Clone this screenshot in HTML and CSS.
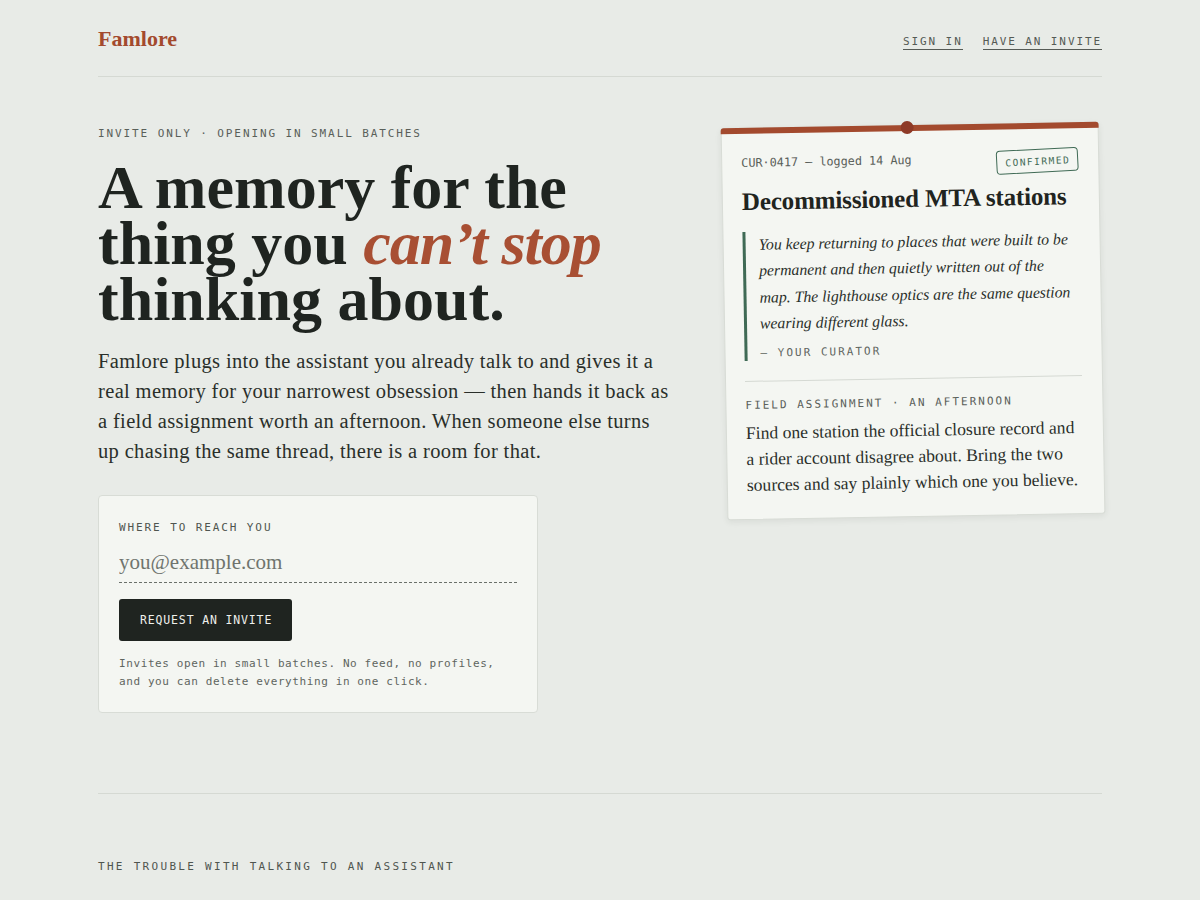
FILE: index.html
```html
<!DOCTYPE html>
<html lang="en">
<head>
<meta charset="utf-8">
<title>Famlore</title>
<link rel="stylesheet" href="styles.css">
</head>
<body>
<div class="page">
  <header class="site-header">
    <div class="logo">Famlore</div>
    <nav class="nav">
      <a href="#" class="nav-link">SIGN IN</a>
      <a href="#" class="nav-link">HAVE AN INVITE</a>
    </nav>
  </header>

  <main class="hero">
    <section class="hero-left">
      <p class="eyebrow">INVITE ONLY · OPENING IN SMALL BATCHES</p>
      <h1 class="headline">A memory for the<br>thing you <em class="accent">can’t stop</em><br>thinking about.</h1>
      <p class="lede">Famlore plugs into the assistant you already talk to and gives it a<br>real memory for your narrowest obsession — then hands it back as<br>a field assignment worth an afternoon. When someone else turns<br>up chasing the same thread, there is a room for that.</p>

      <form class="signup">
        <label class="signup-label" for="email">WHERE TO REACH YOU</label>
        <input class="signup-input" id="email" type="email" placeholder="you@example.com">
        <button class="signup-button" type="button">REQUEST AN INVITE</button>
        <p class="signup-note">Invites open in small batches. No feed, no profiles,<br>and you can delete everything in one click.</p>
      </form>
    </section>

    <aside class="hero-right">
      <article class="card">
        <div class="card-bar"><span class="card-pin"></span></div>
        <div class="card-body">
          <div class="card-meta">
            <span class="card-id">CUR·0417 — logged 14 Aug</span>
            <span class="badge">CONFIRMED</span>
          </div>
          <h2 class="card-title">Decommissioned MTA stations</h2>
          <blockquote class="card-quote">
            <p class="quote-text">You keep returning to places that were built to be<br>permanent and then quietly written out of the<br>map. The lighthouse optics are the same question<br>wearing different glass.</p>
            <p class="quote-by">— YOUR CURATOR</p>
          </blockquote>
          <div class="card-divider"></div>
          <p class="card-eyebrow">FIELD ASSIGNMENT · AN AFTERNOON</p>
          <p class="card-text">Find one station the official closure record and<br>a rider account disagree about. Bring the two<br>sources and say plainly which one you believe.</p>
        </div>
      </article>
    </aside>
  </main>

  <section class="next">
    <p class="next-eyebrow">THE TROUBLE WITH TALKING TO AN ASSISTANT</p>
  </section>
</div>
</body>
</html>
```

FILE: styles.css
```css
* { box-sizing: border-box; }

html, body {
  margin: 0;
  padding: 0;
}

body {
  background: #e8ebe7;
  color: #1f2420;
  font-family: "Liberation Serif", "Times New Roman", serif;
  height: 900px;
  overflow: hidden;
}

.page {
  width: 1004px;
  margin: 0 auto;
}

.site-header {
  display: flex;
  justify-content: space-between;
  align-items: center;
  padding: 24px 0 22px;
  border-bottom: 1px solid #d5d9d3;
}

.logo {
  font-family: "Liberation Serif", serif;
  font-weight: bold;
  font-size: 22px;
  line-height: 30px;
  color: #a34a2e;
}

.nav {
  display: flex;
  gap: 20px;
  padding-top: 6px;
}

.nav-link {
  font-family: "DejaVu Sans Mono", "Liberation Mono", monospace;
  font-size: 11px;
  letter-spacing: 1.9px;
  color: #555a55;
  text-decoration: none;
  border-bottom: 1px solid #555a55;
  padding-bottom: 1px;
}

.hero {
  display: flex;
  justify-content: space-between;
  align-items: flex-start;
  padding-top: 51px;
}

.hero-left {
  width: 600px;
}

.eyebrow {
  margin: 0;
  font-family: "DejaVu Sans Mono", "Liberation Mono", monospace;
  font-size: 11px;
  letter-spacing: 1.9px;
  line-height: 12px;
  color: #5a605a;
}

.headline {
  margin: 19px 0 0;
  font-family: "Liberation Serif", serif;
  font-weight: bold;
  font-size: 62px;
  line-height: 56px;
  letter-spacing: 0;
  color: #1f2420;
}

.accent {
  color: #a84f33;
  font-style: italic;
  letter-spacing: -1px;
}

.lede {
  margin: 19px 0 0;
  font-size: 20.5px;
  line-height: 30px;
  letter-spacing: 0.35px;
  color: #2a2f2a;
}

.signup {
  margin-top: 29px;
  width: 440px;
  background: #f4f6f2;
  border: 1px solid #d8dcd6;
  border-radius: 4px;
  padding: 26px 20px 21px;
  display: flex;
  flex-direction: column;
  align-items: flex-start;
}

.signup-label {
  font-family: "DejaVu Sans Mono", "Liberation Mono", monospace;
  font-size: 11px;
  letter-spacing: 1.9px;
  line-height: 12px;
  color: #4f554f;
}

.signup-input {
  margin-top: 14px;
  width: 100%;
  border: none;
  border-bottom: 1px dashed #6a706a;
  background: transparent;
  font-family: "Liberation Serif", serif;
  font-size: 21px;
  line-height: 28px;
  padding: 0 0 6px;
  color: #1f2420;
  outline: none;
}

.signup-input::placeholder {
  color: #6f746e;
}

.signup-button {
  margin-top: 16px;
  height: 42px;
  padding: 0 20px 0 21px;
  background: #1f2420;
  color: #eef0ec;
  border: none;
  border-radius: 3px;
  font-family: "DejaVu Sans Mono", "Liberation Mono", monospace;
  font-size: 11.5px;
  letter-spacing: 0.85px;
}

.signup-note {
  margin: 14px 0 0;
  font-family: "DejaVu Sans Mono", "Liberation Mono", monospace;
  font-size: 11px;
  letter-spacing: 0.6px;
  line-height: 18px;
  color: #5f655f;
}

.hero-right {
  width: 378px;
  margin-top: -3px;
}

.card {
  background: #f4f6f2;
  border: 1px solid #d8dcd6;
  border-radius: 3px;
  box-shadow: 0 2px 6px rgba(40, 50, 40, 0.08);
  transform: rotate(-1deg);
  transform-origin: center;
}

.card-bar {
  height: 6px;
  background: #a34a2e;
  border-radius: 3px 3px 0 0;
  position: relative;
  margin: -1px -1px 0;
}

.card-pin {
  position: absolute;
  left: 50%;
  top: -4px;
  width: 13px;
  height: 13px;
  margin-left: -9px;
  border-radius: 50%;
  background: #8e3a27;
}

.card-body {
  padding: 22px 20px 21px 19px;
}

.card-meta {
  display: flex;
  justify-content: space-between;
  align-items: flex-start;
}

.card-id {
  font-family: "DejaVu Sans Mono", "Liberation Mono", monospace;
  font-size: 11.8px;
  line-height: 14px;
  color: #5a605a;
}

.badge {
  margin-top: -2px;
  font-family: "DejaVu Sans Mono", "Liberation Mono", monospace;
  font-size: 9.5px;
  line-height: 11px;
  letter-spacing: 1.5px;
  color: #3f6a55;
  border: 1px solid #3f6a55;
  border-radius: 4px;
  padding: 6px 7px 5px 8px;
  transform: rotate(-2deg);
}

.card-title {
  margin: 8px 0 0;
  font-family: "Liberation Serif", serif;
  font-weight: bold;
  font-size: 25px;
  line-height: 32px;
  letter-spacing: -0.15px;
  color: #1f2420;
}

.card-quote {
  margin: 14px 0 0;
  padding: 0 0 0 13px;
  border-left: 3px solid #3f6a55;
}

.quote-text {
  margin: 0;
  font-style: italic;
  font-size: 15.75px;
  line-height: 26.3px;
  color: #2a2f2a;
}

.quote-by {
  margin: 10px 0 0;
  font-family: "DejaVu Sans Mono", "Liberation Mono", monospace;
  font-size: 11px;
  letter-spacing: 2px;
  line-height: 14px;
  color: #5f655f;
}

.card-divider {
  margin: 20px 0 0;
  border-top: 1px solid #d5d9d3;
}

.card-eyebrow {
  margin: 18px 0 0;
  font-family: "DejaVu Sans Mono", "Liberation Mono", monospace;
  font-size: 11px;
  letter-spacing: 2px;
  line-height: 12px;
  color: #5a605a;
}

.card-text {
  margin: 8px 0 0;
  font-size: 17.6px;
  line-height: 26px;
  color: #2a2f2a;
}

.next {
  margin-top: 80px;
  border-top: 1px solid #d5d9d3;
  padding-top: 66px;
}

.next-eyebrow {
  margin: 0;
  font-family: "DejaVu Sans Mono", "Liberation Mono", monospace;
  font-size: 11px;
  letter-spacing: 2.3px;
  color: #4f554f;
}
```
